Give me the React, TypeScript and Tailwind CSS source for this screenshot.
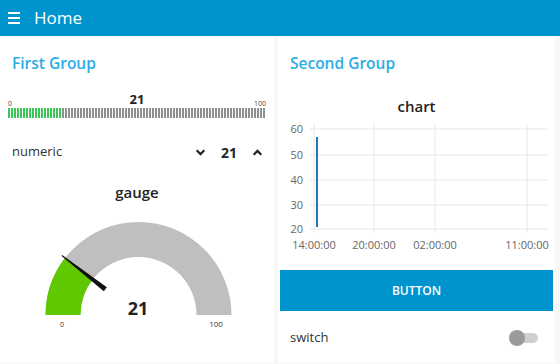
import React from "react";

const font = { fontFamily: '"Open Sans", "Noto Sans", sans-serif' };

function LevelBar({ value }: { value: number }) {
  const total = 86;
  const lit = Math.round((value / 100) * total);
  return (
    <div className="flex h-[10px] gap-[1px]">
      {Array.from({ length: total }).map((_, i) => (
        <div key={i} className={i < lit ? "h-full w-[2px] bg-[#3cc65a]" : "h-full w-[2px] bg-[#8e8e8e]"} />
      ))}
    </div>
  );
}

function Gauge() {
  return (
    <svg width="274" height="120" viewBox="0 0 274 120">
      <path d="M 45.5 101 A 93 93 0 0 1 231.5 101 L 196.5 101 A 58 58 0 0 0 80.5 101 Z" fill="#bfbfbf" />
      <path d="M 45.5 101 A 93 93 0 0 1 65 44 L 92.7 65.4 A 58 58 0 0 0 80.5 101 Z" fill="#5fc800" />
      <polygon points="62.2,41.1 61.6,41.9 103.8,77.3 106.8,73.3" fill="#111" />
      <text x="138" y="101" textAnchor="middle" fontSize="18" fontWeight="700" fill="#222" style={font}>
        21
      </text>
      <text x="62" y="113" textAnchor="middle" fontSize="7" fill="#333" style={font}>
        0
      </text>
      <text x="216" y="113" textAnchor="middle" fontSize="8" fill="#333" style={font}>
        100
      </text>
    </svg>
  );
}

function Chart() {
  const ys = [
    { v: "60", y: 13 },
    { v: "50", y: 39 },
    { v: "40", y: 64 },
    { v: "30", y: 89 },
    { v: "20", y: 113 },
  ];
  const xs = [
    { t: "14:00:00", x: 36 },
    { t: "20:00:00", x: 96 },
    { t: "02:00:00", x: 157 },
    { t: "11:00:00", x: 249 },
  ];
  return (
    <svg width="277" height="138" viewBox="0 0 277 138">
      {ys.map((r) => (
        <g key={r.v}>
          <line x1="32" x2="270" y1={r.y} y2={r.y} stroke="#e6e6e6" />
          <text x="25" y={r.y + 4} textAnchor="end" fontSize="11" fill="#666" style={font}>
            {r.v}
          </text>
        </g>
      ))}
      {xs.map((c) => (
        <g key={c.t}>
          <line x1={c.x} x2={c.x} y1="8" y2="117" stroke="#e6e6e6" />
          <text x={c.x} y="133" textAnchor="middle" fontSize="11" fill="#666" style={font}>
            {c.t}
          </text>
        </g>
      ))}
      <line x1="39" x2="39" y1="21" y2="111" stroke="#1f77b4" strokeWidth="2" />
    </svg>
  );
}

export default function App() {
  return (
    <div className="h-[364px] w-[560px] overflow-hidden bg-[#f8f8f8]" style={font}>
      <header className="flex h-9 items-center bg-[#0094ce] text-white">
        <div className="ml-[8px] flex w-[12px] flex-col gap-[3px]">
          <span className="h-[2px] bg-white" />
          <span className="h-[2px] bg-white" />
          <span className="h-[2px] bg-white" />
        </div>
        <span className="ml-[14px] text-[17px]">Home</span>
      </header>

      <div className="flex gap-[4px]">
        <section className="h-[326px] w-[274px] bg-white">
          <div className="flex h-[56px] items-center pl-[12px] text-[15.5px] font-semibold text-[#2aade6]">First Group</div>
          <div className="px-[8px] pt-[3px]">
            <div className="relative flex h-[12px] items-end justify-between text-[7px] leading-none text-[#444]">
              <span>0</span>
              <span className="absolute left-1/2 top-[-2px] -translate-x-1/2 text-[13px] font-bold text-[#222]">21</span>
              <span>100</span>
            </div>
            <div className="mt-[1px]">
              <LevelBar value={21} />
            </div>
          </div>
          <div className="mt-[15px] flex h-[38px] items-center pl-[12px] pr-[10px] text-[13px] text-[#333]">
            <span className="flex-1">numeric</span>
            <svg width="13" height="13" viewBox="0 0 24 24" className="mr-[10px]">
              <path d="M5 8l7 7 7-7" fill="none" stroke="#222" strokeWidth="4" />
            </svg>
            <span className="w-[24px] text-center text-[14px] font-bold text-[#222]">21</span>
            <svg width="13" height="13" viewBox="0 0 24 24" className="ml-[10px]">
              <path d="M5 16l7-7 7 7" fill="none" stroke="#222" strokeWidth="4" />
            </svg>
          </div>
          <div className="mt-[11px] flex h-[20px] items-center justify-center text-[15px] font-semibold text-[#222]">gauge</div>
          <div className="mt-[12px]">
            <Gauge />
          </div>
        </section>

        <section className="h-[326px] w-[277px] bg-white">
          <div className="flex h-[56px] items-center pl-[12px] text-[15.5px] font-semibold text-[#2aade6]">Second Group</div>
          <div className="mt-[4px] flex h-[20px] items-center justify-center text-[15px] font-semibold text-[#222]">chart</div>
          <Chart />
          <button className="mx-[2px] mt-[16px] flex h-[41px] w-[273px] items-center justify-center bg-[#0094ce] text-[12px] font-semibold text-white">
            BUTTON
          </button>
          <div className="mt-[7px] flex h-[40px] items-center pl-[12px] pr-[17px] text-[13px] text-[#333]">
            <span className="flex-1">switch</span>
            <div className="relative h-[16px] w-[29px]">
              <div className="absolute left-[3px] right-0 top-[3px] h-[10px] rounded-full bg-[#cfcfcf]" />
              <div className="absolute left-0 top-0 h-[16px] w-[16px] rounded-full bg-[#9a9a9a]" />
            </div>
          </div>
        </section>
      </div>
    </div>
  );
}
